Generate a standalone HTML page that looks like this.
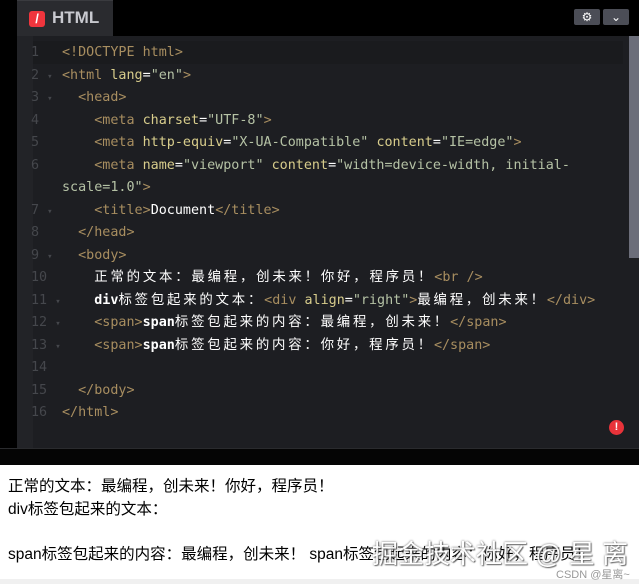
<!DOCTYPE html>
<html><head><meta charset="utf-8"><style>
*{margin:0;padding:0;box-sizing:border-box}
body{width:639px;height:584px;background:#f0f0f0;position:relative;overflow:hidden;font-family:"Liberation Sans","Noto Sans CJK SC",sans-serif}
.top{position:absolute;left:0;top:0;width:639px;height:448px;background:#000}
.tab{position:absolute;left:17px;top:0;width:96px;height:37px;background:#2a2b2f;border-top:1px solid #3a3b3f}
.logo{position:absolute;left:12px;top:10px;width:16px;height:16px;background:#f0353d;border-radius:3px;color:#fff;font-size:13px;line-height:16px;text-align:center;font-weight:bold}
.tabt{position:absolute;left:35px;top:7px;color:#c8c9cf;font-weight:bold;font-size:17px}
.btn{position:absolute;top:9px;width:26px;height:16px;background:#4b4d56;border-radius:2px;color:#fff;font-size:12px;text-align:center;line-height:16px}
.ed{position:absolute;left:17px;top:36px;width:622px;height:412px;background:#1d1e22}
.gut{position:absolute;left:0;top:0;width:16px;height:412px;background:#222327}
.act{position:absolute;left:16px;top:5px;width:590px;height:23px;background:#1a1b1e}
.sb{position:absolute;left:612px;top:0;width:10px;height:222px;background:#6c6e7a}
.code{position:absolute;left:0;top:6px;font-family:"DejaVu Sans Mono","Noto Sans CJK SC",monospace;font-size:13.4px;color:#fff}
.code div{height:22.5px;line-height:22.5px;white-space:pre;overflow:visible}
.ln{display:inline-block;width:45px;color:#45474c;padding-left:14px}
.ar{color:#45474c;font-size:9px}
.t{color:#a88e60}.a{color:#d8cd8c}.s{color:#b5c2a5}.b{font-weight:bold}
.c{letter-spacing:2.8px}
.err{position:absolute;left:609px;top:420px;width:15px;height:15px;border-radius:50%;background:#e8333a;color:#fff;font-size:11px;font-weight:bold;text-align:center;line-height:15px}
.bar{position:absolute;left:0;top:448px;width:639px;height:17px;background:#050505;border-top:1px solid #2a2b2e}
.out{position:absolute;left:0;top:465px;width:639px;height:114px;background:#fff;font-size:15.5px;color:#000;line-height:22.5px}
.out p{position:absolute;left:8px;white-space:nowrap}
.wm{position:absolute;left:372px;top:534px;font-size:26px;color:#fff;text-shadow:0 0 2px #555,1px 1px 1px #666;white-space:nowrap;opacity:.9}
.csdn{position:absolute;left:556px;top:566px;font-size:11px;color:#999}
</style></head><body>
<div class="top"></div>
<div class="tab"><div class="logo">/</div><div class="tabt">HTML</div></div>
<div class="btn" style="left:574px">⚙</div>
<div class="btn" style="left:603px">⌄</div>
<div class="ed">
<div class="gut"></div><div class="act"></div><div class="sb"></div>
<div class="code">
<div><span class="ln">1  </span><span class="t">&lt;!DOCTYPE html&gt;</span></div>
<div><span class="ln">2 <span class="ar">▾</span></span><span class="t">&lt;html </span><span class="a">lang</span>=<span class="s">"en"</span><span class="t">&gt;</span></div>
<div><span class="ln">3 <span class="ar">▾</span></span>  <span class="t">&lt;head&gt;</span></div>
<div><span class="ln">4  </span>    <span class="t">&lt;meta </span><span class="a">charset</span>=<span class="s">"UTF-8"</span><span class="t">&gt;</span></div>
<div><span class="ln">5  </span>    <span class="t">&lt;meta </span><span class="a">http-equiv</span>=<span class="s">"X-UA-Compatible"</span> <span class="a">content</span>=<span class="s">"IE=edge"</span><span class="t">&gt;</span></div>
<div><span class="ln">6  </span>    <span class="t">&lt;meta </span><span class="a">name</span>=<span class="s">"viewport"</span> <span class="a">content</span>=<span class="s">"width=device-width, initial-</span></div>
<div><span class="ln"></span><span class="s">scale=1.0"</span><span class="t">&gt;</span></div>
<div><span class="ln">7 <span class="ar">▾</span></span>    <span class="t">&lt;title&gt;</span>Document<span class="t">&lt;/title&gt;</span></div>
<div><span class="ln">8  </span>  <span class="t">&lt;/head&gt;</span></div>
<div><span class="ln">9 <span class="ar">▾</span></span>  <span class="t">&lt;body&gt;</span></div>
<div><span class="ln">10 </span>    <span class="c">正常的文本：最编程，创未来！你好，程序员！</span><span class="t">&lt;br /&gt;</span></div>
<div><span class="ln">11 <span class="ar">▾</span></span>    <span class="b">div</span><span class="c">标签包起来的文本：</span><span class="t">&lt;div </span><span class="a">align</span>=<span class="s">"right"</span><span class="t">&gt;</span><span class="c">最编程，创未来！</span><span class="t">&lt;/div&gt;</span></div>
<div><span class="ln">12 <span class="ar">▾</span></span>    <span class="t">&lt;span&gt;</span><span class="b">span</span><span class="c">标签包起来的内容：最编程，创未来！</span><span class="t">&lt;/span&gt;</span></div>
<div><span class="ln">13 <span class="ar">▾</span></span>    <span class="t">&lt;span&gt;</span><span class="b">span</span><span class="c">标签包起来的内容：你好，程序员！</span><span class="t">&lt;/span&gt;</span></div>
<div><span class="ln">14 </span></div>
<div><span class="ln">15 </span>  <span class="t">&lt;/body&gt;</span></div>
<div><span class="ln">16 </span><span class="t">&lt;/html&gt;</span></div>
</div>
</div>
<div class="err">!</div>
<div class="bar"></div>
<div class="out">
<p style="top:11px">正常的文本：最编程，创未来！你好，程序员！</p>
<p style="top:34px">div标签包起来的文本：</p>
<p style="top:79px">span标签包起来的内容：最编程，创未来！ span标签包起来的内容：你好，程序员！</p>
</div>
<div class="wm">掘金技术社区 @ 星 离</div>
<div class="csdn">CSDN @星离~</div>
</body></html>
